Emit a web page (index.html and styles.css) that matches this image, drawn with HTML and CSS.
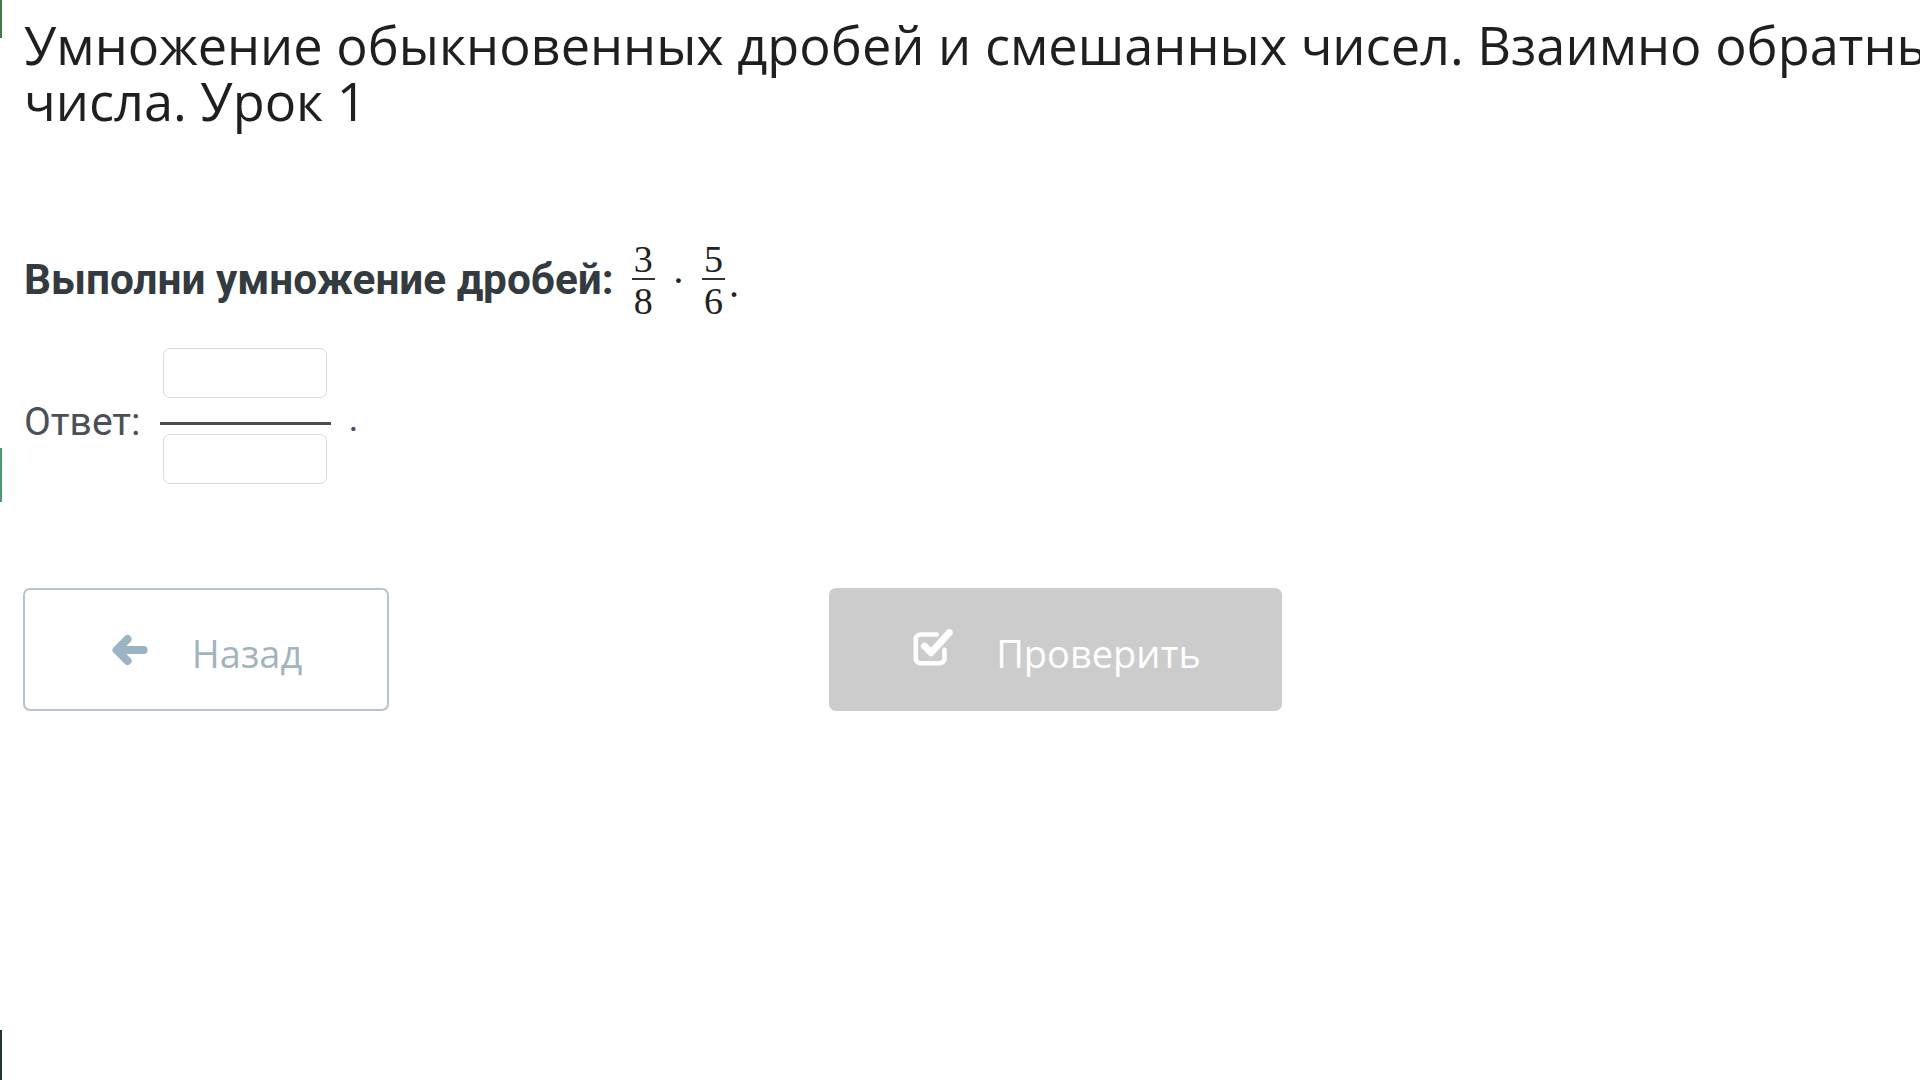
FILE: index.html
```html
<!DOCTYPE html>
<html lang="ru">
<head>
<meta charset="utf-8">
<title>Умножение дробей</title>
<link rel="stylesheet" href="styles.css">
</head>
<body>
<div class="edge edge-top"></div>
<div class="edge edge-mid"></div>
<div class="edge edge-bottom"></div>
<main class="page">
  <h1 class="title">Умножение обыкновенных дробей и смешанных чисел. Взаимно обратные<br>числа. Урок 1</h1>

  <div class="task">
    <span class="task-text">Выполни умножение дробей:</span>
    <span class="frac"><span class="num">3</span><span class="den">8</span></span>
    <span class="op">·</span>
    <span class="frac"><span class="num">5</span><span class="den">6</span></span>
    <span class="op end">.</span>
  </div>

  <div class="answer">
    <span class="answer-label">Ответ:</span>
    <span class="answer-frac">
      <input class="box" type="text" aria-label="числитель">
      <span class="answer-bar"></span>
      <input class="box" type="text" aria-label="знаменатель">
    </span>
    <span class="answer-dot">.</span>
  </div>

  <div class="actions">
    <button class="btn btn-back" type="button">
      <svg class="ico-arrow" viewBox="0 0 26 24" width="38" height="36" aria-hidden="true">
        <path d="M23 12H5M12 4.5L4.5 12 12 19.5" fill="none" stroke="#9bb4c3" stroke-width="5.5" stroke-linecap="round" stroke-linejoin="round"/>
      </svg>
      <span>Назад</span>
    </button>
    <button class="btn btn-check" type="button">
      <svg class="ico-check" viewBox="0 0 24 24" width="46" height="46" aria-hidden="true">
        <path d="M18 13.5V18a2.5 2.5 0 0 1-2.5 2.5h-10A2.5 2.5 0 0 1 3 18V8a2.5 2.5 0 0 1 2.5-2.5H14" fill="none" stroke="#fff" stroke-width="2.4" stroke-linecap="round"/>
        <path d="M7.5 11.5l3.5 3.5L20.5 4.5" fill="none" stroke="#fff" stroke-width="3.6" stroke-linecap="round" stroke-linejoin="round"/>
      </svg>
      <span>Проверить</span>
    </button>
  </div>
</main>
</body>
</html>
```
FILE: styles.css
```css
html, body {
  margin: 0;
  padding: 0;
  background: #ffffff;
  overflow: hidden;
  height: 1080px;
}

body {
  position: relative;
}

.edge {
  position: absolute;
  left: 0;
  width: 2px;
}
.edge-top { top: 0; height: 38px; background: #3e7a46; }
.edge-mid { top: 448px; height: 54px; background: #4e9a70; }
.edge-bottom { top: 1030px; height: 50px; background: #24352a; }

.page {
  padding: 17px 0 0 24px;
  font-family: "Open Sans", "Noto Sans", sans-serif;
}

.title {
  margin: 0;
  font-family: "Open Sans", sans-serif;
  font-weight: 400;
  font-size: 52.3px;
  line-height: 56px;
  color: #1f1f1f;
  white-space: nowrap;
}

.task {
  margin-top: 112px;
  display: flex;
  align-items: center;
  color: #333a40;
}

.task-text {
  font-family: Roboto, "Open Sans", sans-serif;
  font-weight: 700;
  font-size: 42.3px;
  margin-right: 18px;
  position: relative;
  top: 2px;
}

.frac {
  display: inline-flex;
  flex-direction: column;
  align-items: center;
  font-family: "Liberation Serif", "DejaVu Serif", serif;
  font-size: 38px;
  line-height: 31px;
  color: #222;
  position: relative;
  top: 3px;
}
.frac .num {
  padding: 0 2px 3px;
  border-bottom: 2px solid #333;
}
.frac .den {
  padding-top: 6px;
}
.op {
  font-family: "Liberation Serif", serif;
  font-size: 40px;
  color: #222;
  margin: 0 17px;
  position: relative;
  top: 3px;
}
.op.end {
  margin: 0 0 0 4px;
  top: 6px;
}

.answer {
  margin-top: 34px;
  display: flex;
  align-items: center;
  color: #4a5058;
}

.answer-label {
  font-family: Roboto, "Open Sans", sans-serif;
  font-size: 39px;
  margin-right: 19px;
  position: relative;
  top: 6px;
}

.answer-frac {
  display: flex;
  flex-direction: column;
  align-items: center;
  width: 171px;
}

.box {
  box-sizing: border-box;
  width: 164px;
  height: 50px;
  border: 1.5px solid #d3dde1;
  border-radius: 7px;
  background: #fff;
  padding: 0;
  margin: 0;
}

.answer-bar {
  display: block;
  width: 171px;
  height: 3px;
  background: #4a4f55;
  margin: 24px 0 9px;
}

.answer-dot {
  font-family: Roboto, sans-serif;
  font-size: 38px;
  margin-left: 18px;
  padding-top: 4px;
}

.actions {
  margin-top: 104px;
  display: flex;
  gap: 440px;
  margin-left: -1px;
}

.btn {
  box-sizing: border-box;
  height: 123px;
  border-radius: 7px;
  display: flex;
  align-items: center;
  justify-content: center;
  font-family: "Open Sans", sans-serif;
  font-size: 38px;
  cursor: pointer;
  padding: 0;
}

.btn-back {
  width: 366px;
  background: #fff;
  border: 2px solid #b7c4cb;
  color: #a3b4be;
  gap: 44px;
}

.btn-check {
  width: 453px;
  background: #cccccc;
  border: none;
  color: #ffffff;
  gap: 40px;
}

.btn span {
  position: relative;
  top: 3px;
}

.ico-check {
  position: relative;
  top: -3px;
}
```
